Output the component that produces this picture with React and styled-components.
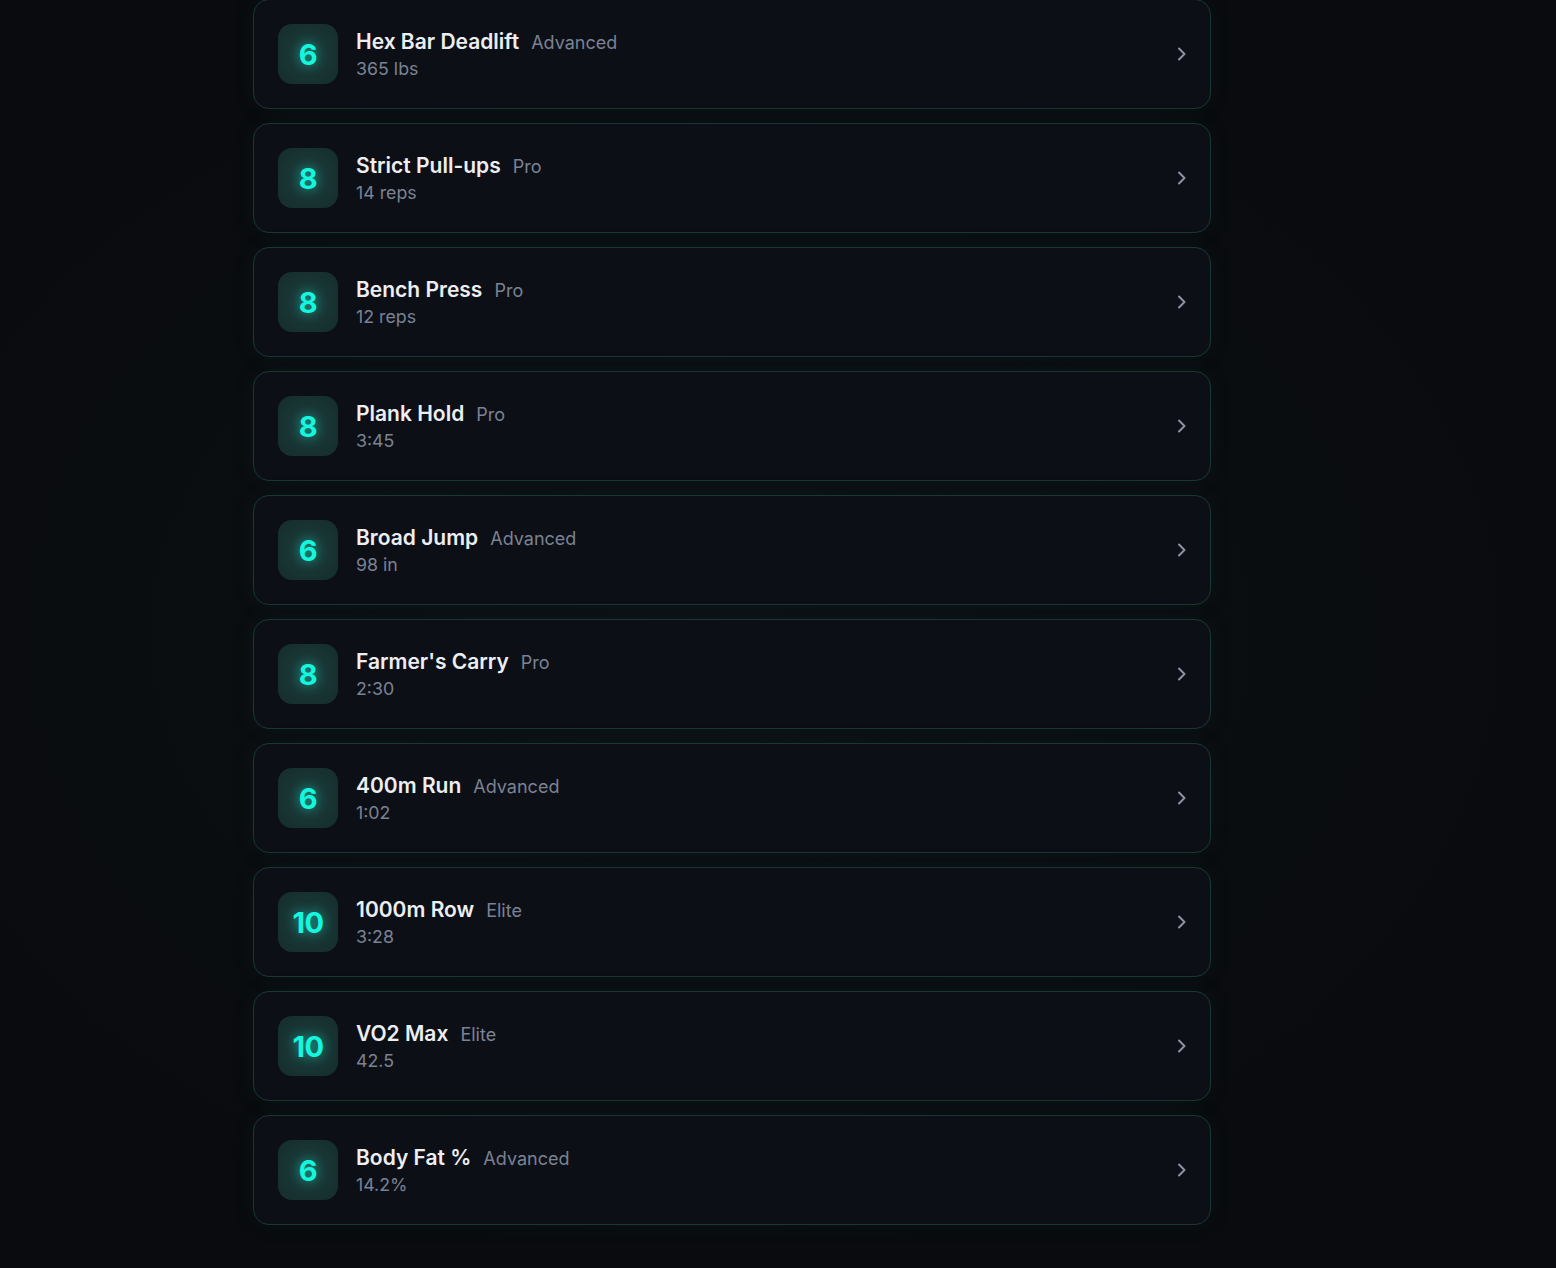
import styled, { createGlobalStyle } from "styled-components"

const GlobalStyle = createGlobalStyle`
    html, body {
        margin: 0;
        padding: 0;
        background: #0a0c10;
        font-family: Inter, "Noto Sans", sans-serif;
    }
`

const Page = styled.div`
    min-height: 1268px;
    background: radial-gradient(ellipse at 45% 50%, #0c1013 0%, #090b0e 70%);
    padding: 0 0 42px 253px;
    box-sizing: border-box;
    margin-top: -1px;
`

const List = styled.div`
    width: 958px;
    display: flex;
    flex-direction: column;
    gap: 14px;
`

const Card = styled.div`
    display: flex;
    align-items: center;
    gap: 18px;
    height: 110px;
    box-sizing: border-box;
    padding: 0 20px 0 24px;
    background: #0d0f16;
    border: 1.5px solid #1a3735;
    border-radius: 16px;
    box-shadow: 0 0 22px rgba(25, 90, 85, 0.1);
`

const Badge = styled.div`
    width: 60px;
    height: 60px;
    flex-shrink: 0;
    border-radius: 14px;
    display: flex;
    align-items: center;
    justify-content: center;
    background: radial-gradient(circle at 50% 50%, #1e3f3e 0%, #183433 55%, #152c2c 100%);
    color: #14f6de;
    font-size: 29px;
    font-weight: 700;
    letter-spacing: -0.5px;
    text-shadow: 0 0 12px rgba(20, 246, 222, 0.6);
`

const Info = styled.div`
    flex: 1;
    display: flex;
    flex-direction: column;
    padding-top: 2px;
`

const TitleRow = styled.div`
    display: flex;
    align-items: baseline;
    gap: 12px;
    line-height: 26px;
`

const Name = styled.span`
    color: #eceef2;
    font-size: 21px;
    font-weight: 600;
`

const Level = styled.span`
    color: #7a8294;
    font-size: 18px;
`

const Value = styled.span`
    color: #7a8294;
    font-size: 17.8px;
    line-height: 26px;
`

const Chevron = styled.svg`
    width: 12px;
    height: 16px;
    margin-right: 2px;
    flex-shrink: 0;
`

const items = [
    { score: 6, name: "Hex Bar Deadlift", level: "Advanced", value: "365 lbs" },
    { score: 8, name: "Strict Pull-ups", level: "Pro", value: "14 reps" },
    { score: 8, name: "Bench Press", level: "Pro", value: "12 reps" },
    { score: 8, name: "Plank Hold", level: "Pro", value: "3:45" },
    { score: 6, name: "Broad Jump", level: "Advanced", value: "98 in" },
    { score: 8, name: "Farmer's Carry", level: "Pro", value: "2:30" },
    { score: 6, name: "400m Run", level: "Advanced", value: "1:02" },
    { score: 10, name: "1000m Row", level: "Elite", value: "3:28" },
    { score: 10, name: "VO2 Max", level: "Elite", value: "42.5" },
    { score: 6, name: "Body Fat %", level: "Advanced", value: "14.2%" },
]

function App() {
    return (
        <Page>
            <GlobalStyle />
            <List>
                {items.map((it) => (
                    <Card key={it.name}>
                        <Badge>{it.score}</Badge>
                        <Info>
                            <TitleRow>
                                <Name>{it.name}</Name>
                                <Level>{it.level}</Level>
                            </TitleRow>
                            <Value>{it.value}</Value>
                        </Info>
                        <Chevron viewBox="0 0 12 16" fill="none">
                            <path d="M3 2.5 L8.5 8 L3 13.5" stroke="#8b93a4" strokeWidth="2" strokeLinecap="round" strokeLinejoin="round" />
                        </Chevron>
                    </Card>
                ))}
            </List>
        </Page>
    )
}

export default App
